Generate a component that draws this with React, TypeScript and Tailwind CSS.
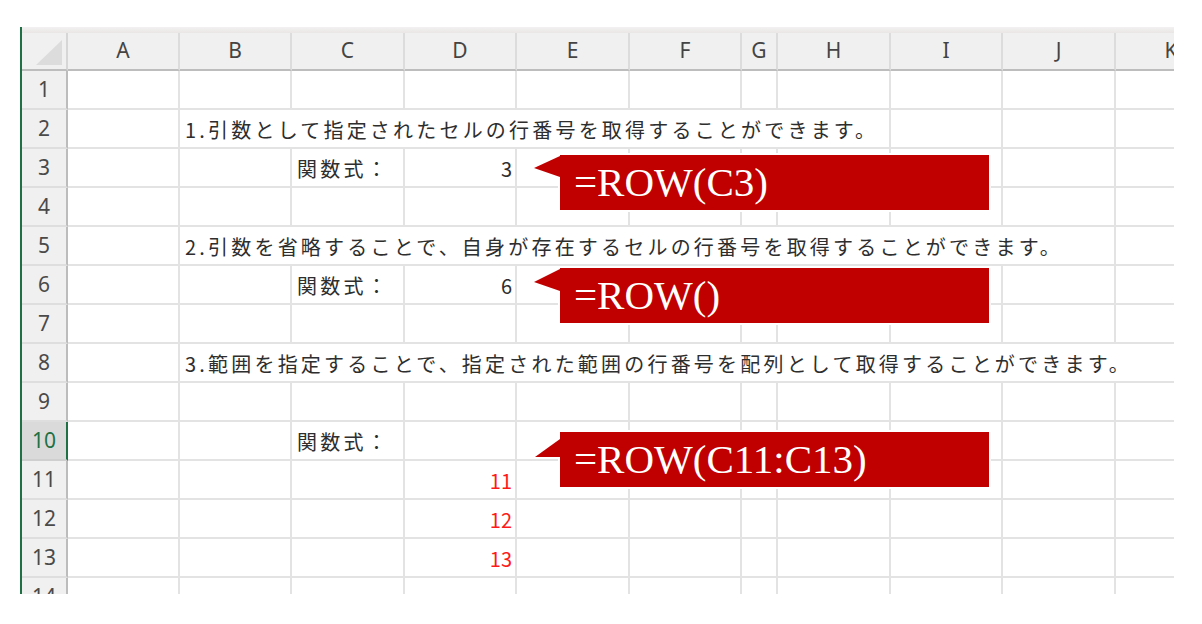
import React from 'react';

type Cell = {
  col: number;
  text: string;
  span?: string;
  align?: 'left' | 'right';
  red?: boolean;
};

const columns = ['A', 'B', 'C', 'D', 'E', 'F', 'G', 'H', 'I', 'J', 'K'];

// worksheet contents keyed by row number
const sheet: Record<number, Cell[]> = {
  2: [{ col: 1, span: 'col-span-7', text: '1.引数として指定されたセルの行番号を取得することができます。' }],
  3: [
    { col: 2, text: '関数式：' },
    { col: 3, text: '3', align: 'right' },
  ],
  5: [{ col: 1, span: 'col-span-9', text: '2.引数を省略することで、自身が存在するセルの行番号を取得することができます。' }],
  6: [
    { col: 2, text: '関数式：' },
    { col: 3, text: '6', align: 'right' },
  ],
  8: [{ col: 1, span: 'col-span-10', text: '3.範囲を指定することで、指定された範囲の行番号を配列として取得することができます。' }],
  10: [{ col: 2, text: '関数式：' }],
  11: [{ col: 3, text: '11', align: 'right', red: true }],
  12: [{ col: 3, text: '12', align: 'right', red: true }],
  13: [{ col: 3, text: '13', align: 'right', red: true }],
};

const gridCols =
  'grid grid-cols-[46px_112px_112px_113px_112px_113px_112px_36px_113px_112px_113px_112px] w-max';

const spanOf: Record<string, number> = { 'col-span-7': 7, 'col-span-9': 9, 'col-span-10': 10 };

function SheetRow({ n }: { n: number }) {
  const cells = sheet[n] ?? [];
  const selected = n === 10;
  const out: React.ReactNode[] = [];
  let c = 0;
  while (c < columns.length) {
    const cell = cells.find(x => x.col === c);
    if (cell) {
      const numeric = /^\d+$/.test(cell.text);
      out.push(
        <div
          key={c}
          className={`${cell.span ?? ''} h-[39px] border-r-2 border-b-2 border-[#e3e3e3] flex items-center whitespace-nowrap overflow-visible pt-[2px] ${
            cell.align === 'right' ? 'justify-end pr-[3px]' : 'pl-[5px]'
          } ${cell.red ? 'text-[#ff1a1a]' : 'text-[#2e2e2e]'}`}
        >
          <span className={`text-[20px] ${numeric ? 'tracking-normal' : 'tracking-[3.2px]'}`}>{cell.text}</span>
        </div>
      );
      c += cell.span ? spanOf[cell.span] : 1;
    } else {
      out.push(<div key={c} className="h-[39px] border-r-2 border-b-2 border-[#e3e3e3]" />);
      c += 1;
    }
  }
  return (
    <>
      <div
        className={`h-[39px] flex items-center justify-center border-b-2 border-r-2 text-[21px] ${
          selected
            ? 'bg-[#dadada] border-r-[#1e7145] border-b-[#cfcfcf] text-[#1e7145]'
            : 'bg-[#f0f0f0] border-b-[#dedede] border-r-[#bcbcbc] text-[#4a4a4a]'
        }`}
        style={{ fontFamily: '"Noto Sans", sans-serif' }}
      >
        {n}
      </div>
      {out}
    </>
  );
}

function Callout({ pos, tip, label }: { pos: string; tip: string; label: string }) {
  return (
    <div className={`absolute ${pos} w-[429px] h-[55px] bg-[#c00000] ring-2 ring-white`}>
      <svg className="absolute left-[-26px] top-0 overflow-visible" width="27" height="30">
        <polygon points={tip} fill="#c00000" />
      </svg>
      <div
        className="pl-[14px] pt-[7px] text-white text-[41px] leading-[41px] whitespace-nowrap"
        style={{ fontFamily: '"Liberation Serif", serif' }}
      >
        {label}
      </div>
    </div>
  );
}

export default function App() {
  const rows = Array.from({ length: 14 }, (_, i) => i + 1);

  return (
    <div className="w-[1202px] h-[624px] bg-white pl-[20px] pt-[27px]">
      <div
        className="relative w-[1154px] h-[567px] overflow-hidden border-l-2 border-[#1e7145]"
        style={{ fontFamily: '"Noto Sans CJK JP", "Noto Sans", sans-serif' }}
      >
        {/* strip under the formula bar */}
        <div className="h-[6px] bg-gradient-to-b from-[#f3f1f1] to-[#e9e6e5]" />

        {/* column headers */}
        <div className={gridCols}>
          <div className="h-[38px] bg-[#f0f0f0] border-b-2 border-r-2 border-b-[#bdbdbd] border-r-[#d6d6d6] relative">
            <svg className="absolute left-[14px] top-[7px]" width="27" height="26">
              <polygon points="26,0 26,25 0,25" fill="#dcdcdc" />
            </svg>
          </div>
          {columns.map(col => (
            <div
              key={col}
              className="h-[38px] bg-[#f0f0f0] border-b-2 border-r-2 border-b-[#bdbdbd] border-r-[#dcdcdc] flex items-center justify-center text-[21px] text-[#444]"
              style={{ fontFamily: '"Noto Sans", sans-serif' }}
            >
              {col}
            </div>
          ))}
        </div>

        {/* cells */}
        <div className={gridCols}>
          {rows.map(n => (
            <SheetRow key={n} n={n} />
          ))}
        </div>

        <Callout pos="left-[538px] top-[128px]" tip="0,13 26,1 26,22" label="=ROW(C3)" />
        <Callout pos="left-[538px] top-[241px]" tip="0,14 26,1 26,23" label="=ROW()" />
        <Callout pos="left-[538px] top-[405px]" tip="1,25 26,7 26,25" label="=ROW(C11:C13)" />
      </div>
    </div>
  );
}
